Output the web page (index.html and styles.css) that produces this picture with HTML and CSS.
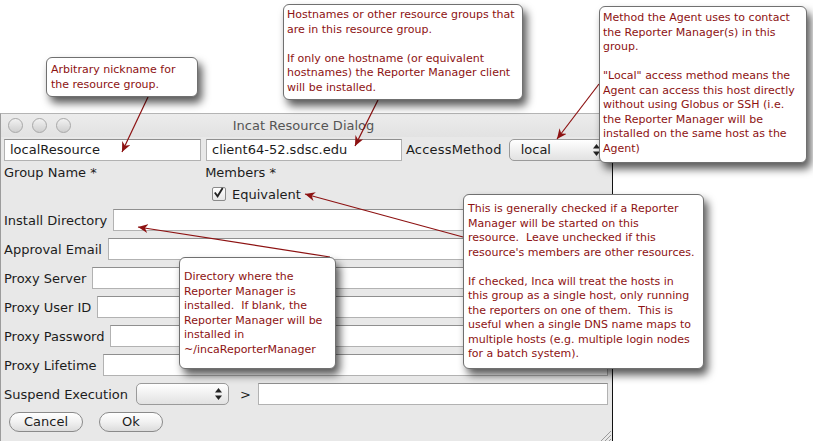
FILE: index.html
```html
<!DOCTYPE html>
<html lang="en">
<head>
    <meta charset="UTF-8">
    <meta name="viewport" content="width=device-width, initial-scale=1.0">
    <title>Incat Resource Dialog</title>
    <link rel="stylesheet" href="styles.css">
</head>
<body>
    <div class="page">
        <div class="window">
            <div class="titlebar">
                <div class="lights">
                    <span class="light"></span>
                    <span class="light"></span>
                    <span class="light"></span>
                </div>
                <div class="title">Incat Resource Dialog</div>
                <div></div>
            </div>

            <div class="content">
                <div class="top-row">
                    <div class="field name-field">localResource</div>
                    <div class="field members-field">client64-52.sdsc.edu</div>
                    <div class="access-label">AccessMethod</div>
                    <div class="select access-select">
                        <span>local</span>
                        <svg class="stepper" width="7" height="12" viewBox="0 0 7 12"><polygon points="3.5,0 7,4.5 0,4.5" /><polygon points="0,7.5 7,7.5 3.5,12" /></svg>
                    </div>
                </div>

                <div class="captions">
                    <span class="group-caption">Group Name *</span>
                    <span>Members *</span>
                </div>

                <div class="check-row">
                    <span class="checkbox">
                        <svg width="14" height="14" viewBox="0 0 14 14"><path d="M3 6.5 L6 10.5 L11.5 1.5" fill="none" stroke="#222" stroke-width="2" /></svg>
                    </span>
                    <span>Equivalent</span>
                </div>

                <div class="form-rows">
                    <div class="form-row"><span class="label">Install Directory</span><div class="field"></div></div>
                    <div class="form-row"><span class="label">Approval Email</span><div class="field"></div></div>
                    <div class="form-row"><span class="label">Proxy Server</span><div class="field"></div></div>
                    <div class="form-row"><span class="label">Proxy User ID</span><div class="field"></div></div>
                    <div class="form-row"><span class="label">Proxy Password</span><div class="field"></div></div>
                    <div class="form-row"><span class="label">Proxy Lifetime</span><div class="field"></div></div>
                    <div class="form-row">
                        <span class="label">Suspend Execution</span>
                        <div class="select suspend-select">
                            <span></span>
                            <svg class="stepper" width="7" height="12" viewBox="0 0 7 12"><polygon points="3.5,0 7,4.5 0,4.5" /><polygon points="0,7.5 7,7.5 3.5,12" /></svg>
                        </div>
                        <span class="gt">&gt;</span>
                        <div class="field"></div>
                    </div>
                </div>

                <div class="buttons">
                    <div class="button cancel">Cancel</div>
                    <div class="button ok">Ok</div>
                </div>
            </div>

            <svg class="grip" width="11" height="11" viewBox="0 0 11 11">
                <path d="M1 11 L11 1 M5 11 L11 5 M9 11 L11 9" stroke="#9a9a9a" stroke-width="1" />
            </svg>
        </div>

        <!-- callout arrows -->
        <svg class="arrows" width="813" height="441" viewBox="0 0 813 441">
            <defs>
                <marker id="head" markerWidth="11" markerHeight="9" refX="10" refY="4.5" orient="auto" markerUnits="userSpaceOnUse">
                    <path d="M0,0 L10,4.5 L0,9 L3,4.5 Z" fill="#8d1212" />
                </marker>
            </defs>
            <g stroke="#8d1212" stroke-width="1.2" marker-end="url(#head)">
                <line x1="148" y1="97" x2="122" y2="152" />
                <line x1="378" y1="100" x2="355" y2="146" />
                <line x1="599" y1="84" x2="557" y2="139" />
                <line x1="463" y1="237" x2="305" y2="194" />
                <line x1="330" y1="257" x2="138" y2="227" />
            </g>
        </svg>

        <div class="note note-name">Arbitrary nickname for<br>the resource group.</div>

        <div class="note note-members">Hostnames or other resource groups that<br>are in this resource group.<br><br>If only one hostname (or equivalent<br>hostnames) the Reporter Manager client<br>will be installed.</div>

        <div class="note note-access">Method the Agent uses to contact<br>the Reporter Manager(s) in this<br>group.<br><br>"Local" access method means the<br>Agent can access this host directly<br>without using Globus or SSH (i.e.<br>the Reporter Manager will be<br>installed on the same host as the<br>Agent)</div>

        <div class="note note-dir">Directory where the<br>Reporter Manager is<br>installed.&nbsp; If blank, the<br>Reporter Manager will be<br>installed in<br>~/incaReporterManager</div>

        <div class="note note-equiv">This is generally checked if a Reporter<br>Manager will be started on this<br>resource.&nbsp; Leave unchecked if this<br>resource's members are other resources.<br><br>If checked, Inca will treat the hosts in<br>this group as a single host, only running<br>the reporters on one of them.&nbsp; This is<br>useful when a single DNS name maps to<br>multiple hosts (e.g. multiple login nodes<br>for a batch system).</div>
    </div>
</body>
</html>
```

FILE: styles.css
```css
body {
    margin: 0;
    background-color: #fff;
    font-family: "DejaVu Sans", sans-serif;
}

.page {
    position: relative;
    width: 813px;
    height: 441px;
    overflow: hidden;
}

/* dialog window */

.window {
    position: relative;
    margin-top: 113px;
    width: 613px;
    height: 328px;
    box-sizing: border-box;
    background-color: #e8e8e8;
    border-top: 1px solid #b4b4b4;
    border-left: 1px solid #9c9c9c;
    border-right: 1px solid #111;
    font-size: 13px;
    color: #1c1c1c;
}

.titlebar {
    display: grid;
    grid-template-columns: 1fr auto 1fr;
    align-items: center;
    height: 23px;
    background: linear-gradient(#ececec, #e2e2e2);
}

.lights {
    display: flex;
    gap: 9px;
    padding-left: 7px;
}

.light {
    width: 13px;
    height: 13px;
    border-radius: 50%;
    border: 1px solid #a8a8a8;
    background: linear-gradient(#f2f2f2, #cfcfcf);
}

.title {
    color: #555;
    padding-right: 6px;
}

.content {
    padding: 1px 4px 0 2px;
}

.field {
    height: 22px;
    box-sizing: border-box;
    background-color: #fff;
    border: 1px solid #b2b2b2;
    border-top-color: #8f8f8f;
    padding: 0 5px;
    line-height: 20px;
    white-space: nowrap;
    overflow: hidden;
}

.top-row {
    display: flex;
    align-items: center;
    height: 23px;
}

.name-field {
    width: 197px;
    margin-left: 1px;
}

.members-field {
    width: 196px;
    margin-left: 5px;
}

.access-label {
    margin-left: 4px;
    letter-spacing: 0.2px;
}

.select {
    display: flex;
    align-items: center;
    justify-content: space-between;
    height: 22px;
    box-sizing: border-box;
    border: 1px solid #9a9a9a;
    border-radius: 5px;
    background: linear-gradient(#ffffff, #f0f0f0 50%, #e2e2e2);
    padding: 0 6px 0 11px;
}

.stepper {
    fill: #222;
}

.access-select {
    width: 98px;
    margin-left: 7px;
}

.captions {
    margin-top: 4px;
    line-height: 16px;
    padding-left: 1px;
}

.group-caption {
    display: inline-block;
    width: 197px;
}

.check-row {
    display: flex;
    align-items: center;
    gap: 6px;
    height: 14px;
    margin-top: 6px;
    padding-left: 209px;
}

.checkbox {
    display: flex;
    width: 14px;
    height: 14px;
    box-sizing: border-box;
    border: 1px solid #8a8a8a;
    border-radius: 2px;
    background: linear-gradient(#fff, #e6e6e6);
    overflow: visible;
}

.checkbox svg {
    margin: -2px 0 0 -1px;
}

.form-rows {
    display: flex;
    flex-direction: column;
    gap: 7px;
    margin-top: 8px;
}

.form-row {
    display: flex;
    align-items: center;
    gap: 6px;
    height: 22px;
    padding-left: 1px;
}

.form-row .field {
    flex: 1;
}

.suspend-select {
    width: 93px;
    margin-left: 2px;
}

.gt {
    margin: 0 1px 0 5px;
}

.buttons {
    display: flex;
    gap: 16px;
    margin-top: 7px;
    padding-left: 6px;
}

.button {
    height: 20px;
    box-sizing: border-box;
    border: 1px solid #8a8a8a;
    border-radius: 10px;
    background: linear-gradient(#ffffff, #f1f1f1 50%, #dcdcdc);
    text-align: center;
    line-height: 18px;
}

.cancel {
    width: 74px;
}

.ok {
    width: 64px;
}

.grip {
    position: absolute;
    right: 1px;
    bottom: 0;
}

/* callouts */

.arrows {
    position: absolute;
    top: 0;
    left: 0;
}

.note {
    position: absolute;
    box-sizing: border-box;
    background-color: #fff;
    border: 1px solid #707070;
    border-radius: 6px;
    box-shadow: 4px 6px 8px rgba(0, 0, 0, 0.65);
    color: #8d1212;
    font-size: 11px;
    line-height: 14.5px;
    white-space: nowrap;
}

.note-name {
    left: 46px;
    top: 57px;
    width: 152px;
    height: 40px;
    padding: 5px 4px;
}

.note-members {
    left: 283px;
    top: 4px;
    width: 240px;
    height: 96px;
    padding: 3px 3px;
}

.note-access {
    left: 599px;
    top: 6px;
    width: 208px;
    height: 157px;
    padding: 4px 3px;
}

.note-dir {
    left: 179px;
    top: 257px;
    width: 157px;
    height: 112px;
    padding: 12px 4px;
}

.note-equiv {
    left: 463px;
    top: 194px;
    width: 241px;
    height: 175px;
    padding: 7px 4px;
}
```
